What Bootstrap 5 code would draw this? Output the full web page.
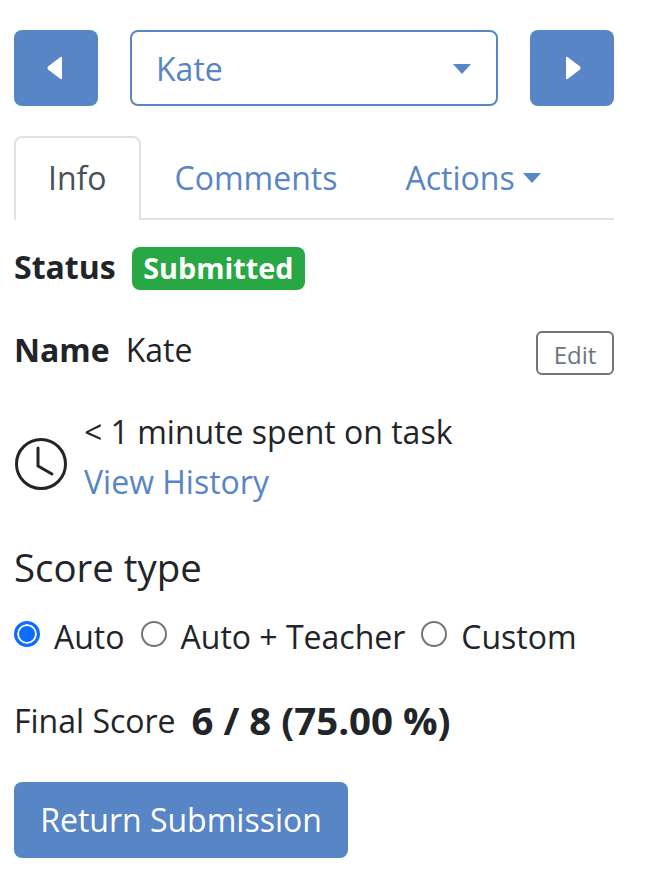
<!DOCTYPE html>
<html lang="en">
<head>
    <meta charset="UTF-8">
    <meta name="viewport" content="width=device-width, initial-scale=1.0">
    <title>Submission</title>
    <link rel="stylesheet" href="https://cdn.jsdelivr.net/npm/bootstrap@5.3.0/dist/css/bootstrap.min.css">
    <style>
        body {
            font-family: "Open Sans", "Noto Sans", sans-serif;
            font-size: 32px;
            color: #212529;
        }

        .panel-wrap {
            width: 600px;
            margin-left: 14px;
            padding-top: 30px;
        }

        .step-btn {
            width: 84px;
            height: 76px;
            background-color: #5885c5;
            border: none;
            border-radius: 8px;
            display: flex;
            align-items: center;
            justify-content: center;
            padding: 0;
        }

        .student-select {
            width: 368px;
            height: 76px;
            border: 2px solid #5885c5;
            border-radius: 8px;
            color: #5885c5;
            background: #fff;
            padding: 2px 25px 0 24px;
            font-size: 32px;
        }

        .caret-down {
            width: 0;
            height: 0;
            border-left: 9px solid transparent;
            border-right: 9px solid transparent;
            border-top: 10px solid #5885c5;
        }

        .tab-row {
            margin-top: 30px;
            border-bottom: 2px solid #dee2e6;
            height: 84px;
        }

        .tab-row .nav-link {
            font-size: 32px;
            color: #5885c5;
            padding: 0 32px 2px;
            height: 84px;
            line-height: 82px;
            border: 2px solid transparent;
            border-bottom: none;
            border-radius: 8px 8px 0 0;
            margin-bottom: -2px;
            display: flex;
            align-items: center;
            gap: 8px;
        }

        .tab-row .nav-link.active {
            color: #495057;
            background: #fff;
            border-color: #dee2e6;
        }

        .status-row {
            margin-top: 27px;
            height: 43px;
        }

        .status-label {
            margin-top: -3px;
        }

        .status-badge {
            background-color: #28a745;
            color: #fff;
            font-size: 28.8px;
            font-weight: 700;
            border-radius: 8px;
            padding: 0 11.5px;
            height: 43px;
            line-height: 42px;
        }

        .name-row {
            margin-top: 41px;
            height: 44px;
        }

        .name-text {
            margin-top: -7px;
        }

        .edit-btn {
            width: 78px;
            height: 44px;
            border: 2px solid #6c757d;
            border-radius: 6px;
            color: #6c757d;
            background: #fff;
            font-size: 24px;
            padding: 4px 0 0;
            line-height: 1;
        }

        .time-row {
            margin-top: 32px;
            height: 100px;
        }

        .clock-icon {
            margin-top: 14px;
        }

        .spent-text {
            line-height: 50px;
        }

        .spent-text a {
            color: #5885c5;
            text-decoration: none;
            display: block;
        }

        .score-title {
            font-size: 38.4px;
            font-weight: 400;
            margin: 37px 0 0;
        }

        .radio-row {
            margin-top: 25px;
            height: 44px;
        }

        .score-radio {
            appearance: none;
            width: 26px;
            height: 26px;
            border: 2px solid #757575;
            border-radius: 50%;
            background: #fff;
            margin: 0 14px 0 0;
            flex-shrink: 0;
            position: relative;
            top: -3px;
        }

        .score-radio:checked {
            border: 3px solid #0d6efd;
            box-shadow: inset 0 0 0 2px #fff;
            background: #0d6efd;
        }

        .final-row {
            margin-top: 37px;
            height: 50px;
        }

        .final-value {
            font-size: 38.4px;
            font-weight: 700;
        }

        .return-btn {
            display: block;
            margin-top: 36px;
            background-color: #5885c5;
            color: #fff;
            border: none;
            border-radius: 8px;
            width: 334px;
            height: 76px;
            font-size: 32px;
            padding: 0;
        }
    </style>
</head>
<body>
    <div class="panel-wrap">
        <div class="d-flex justify-content-between">
            <button class="step-btn" type="button" aria-label="Previous">
                <svg width="18" height="24" viewBox="0 0 18 24"><path d="M15 2V22Q15 24 13.500 23L1 13.500Q0 12 1 10.500L13.500 1Q15 0 15 2Z" fill="#fff"/></svg>
            </button>
            <button class="student-select d-flex align-items-center justify-content-between" type="button">
                <span>Kate</span>
                <span class="caret-down"></span>
            </button>
            <button class="step-btn" type="button" aria-label="Next">
                <svg width="18" height="24" viewBox="0 0 18 24"><path d="M3 2V22Q3 24 4.500 23L17 13.500Q18 12 17 10.500L4.500 1Q3 0 3 2Z" fill="#fff"/></svg>
            </button>
        </div>

        <ul class="nav tab-row">
            <li class="nav-item"><a class="nav-link active" href="#">Info</a></li>
            <li class="nav-item"><a class="nav-link" href="#">Comments</a></li>
            <li class="nav-item"><a class="nav-link" href="#">Actions <span class="caret-down"></span></a></li>
        </ul>

        <div class="d-flex align-items-center status-row">
            <strong class="status-label">Status</strong>
            <span class="status-badge ms-3">Submitted</span>
        </div>

        <div class="d-flex align-items-center justify-content-between name-row">
            <div class="name-text"><strong>Name</strong><span class="ms-3">Kate</span></div>
            <button class="edit-btn" type="button">Edit</button>
        </div>

        <div class="d-flex align-items-center time-row">
            <svg class="clock-icon me-3" width="54" height="54" viewBox="0 0 54 54" fill="none" stroke="#212529" stroke-width="3" stroke-linecap="round" stroke-linejoin="round">
                <circle cx="27" cy="27" r="24.500"/>
                <path d="M24 11V29L38 37"/>
            </svg>
            <div class="spent-text">
                &lt; 1 minute spent on task
                <a href="#">View History</a>
            </div>
        </div>

        <h2 class="score-title">Score type</h2>
        <div class="d-flex align-items-center radio-row">
            <input class="score-radio" type="radio" name="score" id="auto" checked>
            <label for="auto" class="me-3">Auto</label>
            <input class="score-radio" type="radio" name="score" id="both">
            <label for="both" class="me-3">Auto + Teacher</label>
            <input class="score-radio" type="radio" name="score" id="custom">
            <label for="custom">Custom</label>
        </div>

        <div class="d-flex align-items-center final-row">
            <span>Final Score</span>
            <span class="final-value ms-3">6 / 8 (75.00 %)</span>
        </div>

        <button class="return-btn" type="button">Return Submission</button>
    </div>
    <script src="https://cdn.jsdelivr.net/npm/bootstrap@5.3.0/dist/js/bootstrap.bundle.min.js"></script>
</body>
</html>
